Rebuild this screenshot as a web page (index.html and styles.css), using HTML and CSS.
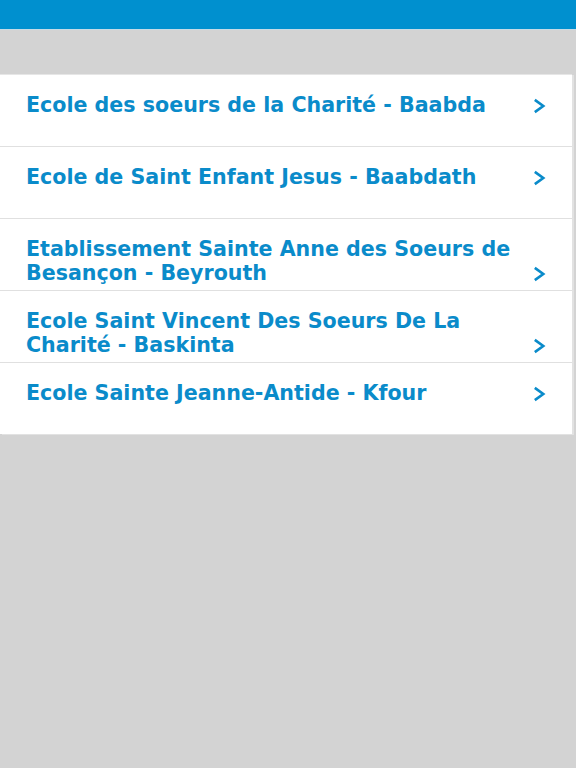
FILE: index.html
```html
<!DOCTYPE html>
<html lang="fr">
<head>
  <meta charset="UTF-8">
  <meta name="viewport" content="width=device-width, initial-scale=1.0">
  <title>Ecoles</title>
  <link rel="stylesheet" href="styles.css">
</head>
<body>

  <div class="topbar"></div>

  <div class="list">
    <a class="row" href="#">
      <div class="row-inner">
        <span class="name">Ecole des soeurs de la Charité - Baabda</span>
        <svg class="chevron" viewBox="0 0 16 16"><path d="M3 1.5 L12 8 L3 14.5"/></svg>
      </div>
    </a>
    <a class="row" href="#">
      <div class="row-inner">
        <span class="name">Ecole de Saint Enfant Jesus - Baabdath</span>
        <svg class="chevron" viewBox="0 0 16 16"><path d="M3 1.5 L12 8 L3 14.5"/></svg>
      </div>
    </a>
    <a class="row" href="#">
      <div class="row-inner">
        <span class="name">Etablissement Sainte Anne des Soeurs de Besançon - Beyrouth</span>
        <svg class="chevron" viewBox="0 0 16 16"><path d="M3 1.5 L12 8 L3 14.5"/></svg>
      </div>
    </a>
    <a class="row" href="#">
      <div class="row-inner">
        <span class="name">Ecole Saint Vincent Des Soeurs De La Charité - Baskinta</span>
        <svg class="chevron" viewBox="0 0 16 16"><path d="M3 1.5 L12 8 L3 14.5"/></svg>
      </div>
    </a>
    <a class="row" href="#">
      <div class="row-inner">
        <span class="name">Ecole Sainte Jeanne-Antide - Kfour</span>
        <svg class="chevron" viewBox="0 0 16 16"><path d="M3 1.5 L12 8 L3 14.5"/></svg>
      </div>
    </a>
  </div>

</body>
</html>
```

FILE: styles.css
```css
html, body {
  margin: 0;
  padding: 0;
  height: 100%;
  background: #d3d3d3;
  font-family: 'DejaVu Sans', 'Liberation Sans', sans-serif;
}

.topbar {
  height: 29px;
  background: #0090cf;
  border-bottom: 1px solid #c6dbe6;
}

.list {
  margin-top: 44px;
  width: 572px;
  background: #fff;
  box-shadow: 2px 1px 0 #e2e2e2;
}

.row {
  display: block;
  box-sizing: border-box;
  height: 72px;
  padding: 18px 0 0 26px;
  border-top: 1px solid #e0e0e0;
  text-decoration: none;
}

.row:first-child {
  border-top: 1px solid #e6e6e6;
}

.row-inner {
  display: flex;
  align-items: flex-end;
}

.name {
  flex: 1;
  color: #0a8bca;
  font-size: 20.6px;
  font-weight: bold;
  line-height: 24px;
  padding-right: 16px;
}

.chevron {
  width: 15px;
  height: 16px;
  margin: 0 25px 3px 0;
  flex-shrink: 0;
}

.chevron path {
  fill: none;
  stroke: #0a8bca;
  stroke-width: 2.8;
}
```
